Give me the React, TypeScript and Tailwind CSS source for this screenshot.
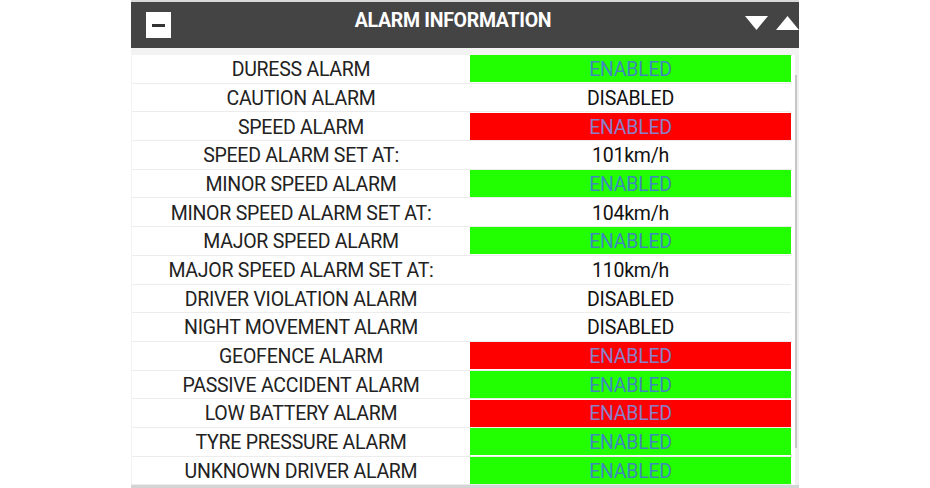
import React from "react";

type Row = { label: string; value: string; tone?: "green" | "red" };

const rows: Row[] = [
  { label: "DURESS ALARM", value: "ENABLED", tone: "green" },
  { label: "CAUTION ALARM", value: "DISABLED" },
  { label: "SPEED ALARM", value: "ENABLED", tone: "red" },
  { label: "SPEED ALARM SET AT:", value: "101km/h" },
  { label: "MINOR SPEED ALARM", value: "ENABLED", tone: "green" },
  { label: "MINOR SPEED ALARM SET AT:", value: "104km/h" },
  { label: "MAJOR SPEED ALARM", value: "ENABLED", tone: "green" },
  { label: "MAJOR SPEED ALARM SET AT:", value: "110km/h" },
  { label: "DRIVER VIOLATION ALARM", value: "DISABLED" },
  { label: "NIGHT MOVEMENT ALARM", value: "DISABLED" },
  { label: "GEOFENCE ALARM", value: "ENABLED", tone: "red" },
  { label: "PASSIVE ACCIDENT ALARM", value: "ENABLED", tone: "green" },
  { label: "LOW BATTERY ALARM", value: "ENABLED", tone: "red" },
  { label: "TYRE PRESSURE ALARM", value: "ENABLED", tone: "green" },
  { label: "UNKNOWN DRIVER ALARM", value: "ENABLED", tone: "green" },
];

export default function App() {
  return (
    <div className="w-[930px] h-[488px] bg-white overflow-hidden font-['Roboto',sans-serif]">
      <div className="mx-auto w-[668px] flex flex-col">
        {/* header */}
        <div className="h-[48px] bg-[#444444] border-t-2 border-[#d9d9d9] flex items-center justify-between pl-[15px]">
          <button className="w-[25px] h-[26px] bg-white flex items-center justify-center">
            <span className="block w-[13px] h-[3px] bg-[#333]" />
          </button>
          <h1 className="text-white font-bold text-[19.5px] tracking-[-0.3px] -ml-[10px] -mt-[9px]">
            ALARM INFORMATION
          </h1>
          <div className="flex items-center gap-[8px] pr-0 -mt-[4px]">
            <svg width="23" height="14" viewBox="0 0 23 14">
              <polygon points="0,0 23,0 11.5,14" fill="#fff" />
            </svg>
            <svg width="23" height="14" viewBox="0 0 23 14">
              <polygon points="0,14 23,14 11.5,0" fill="#fff" />
            </svg>
          </div>
        </div>

        {/* body */}
        <div className="bg-[#f3f3f3] pt-[7px] pl-[1px] flex">
          <div className="flex-1 bg-white">
            {rows.map((r) => (
              <div
                key={r.label}
                className="h-[28.7px] flex items-center border-b border-[#ececec]"
              >
                <div className="w-[338px] text-center text-[19.5px] text-[#222] tracking-[-0.25px] pt-[2px]">
                  {r.label}
                </div>
                <div
                  className={
                    r.tone === "green"
                      ? "w-[321px] h-[27px] bg-[#22ff00] flex items-center justify-center pt-[2px] text-[19.5px] text-[#3f88bb] tracking-[-0.25px]"
                      : r.tone === "red"
                        ? "w-[321px] h-[27px] bg-[#ff0000] flex items-center justify-center pt-[2px] text-[19.5px] text-[#8a7fc8] tracking-[-0.25px]"
                        : "w-[321px] h-[27px] flex items-center justify-center pt-[2px] text-[19.5px] text-[#111] tracking-[-0.25px]"
                  }
                >
                  {r.value}
                </div>
              </div>
            ))}
          </div>
          {/* scrollbar */}
          <div className="w-[8px] bg-white flex">
            <div className="w-[4px]" />
            <div className="w-[4px] bg-[#f0f0f0] pt-[20px]">
              <div className="w-[2px] h-[373px] bg-[#c6c6c6]" />
            </div>
          </div>
        </div>
        <div className="h-[4px] bg-[#d4d4d4]" />
      </div>
    </div>
  );
}
